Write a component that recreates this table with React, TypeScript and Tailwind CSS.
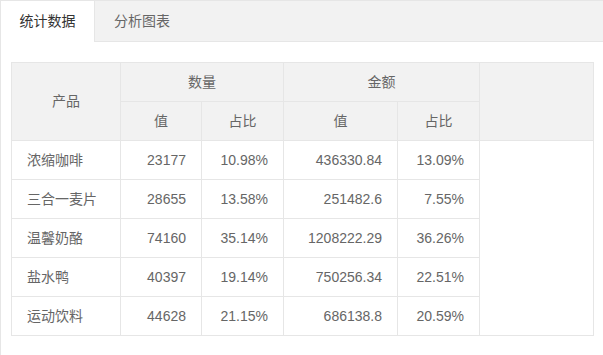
import React from "react";

const rows = [
  { name: "浓缩咖啡", qty: "23177", qtyPct: "10.98%", amt: "436330.84", amtPct: "13.09%" },
  { name: "三合一麦片", qty: "28655", qtyPct: "13.58%", amt: "251482.6", amtPct: "7.55%" },
  { name: "温馨奶酪", qty: "74160", qtyPct: "35.14%", amt: "1208222.29", amtPct: "36.26%" },
  { name: "盐水鸭", qty: "40397", qtyPct: "19.14%", amt: "750256.34", amtPct: "22.51%" },
  { name: "运动饮料", qty: "44628", qtyPct: "21.15%", amt: "686138.8", amtPct: "20.59%" },
];

const th = "border border-[#e6e6e6] h-[39px] p-0 text-center font-normal";
const td = "border border-[#e6e6e6] h-[39px] p-0 px-[15px]";

export default function App() {
  return (
    <div
      className="w-[603px] h-[355px] bg-white text-[14px] text-[#666] overflow-hidden"
      style={{ fontFamily: '"Liberation Sans", "Noto Sans CJK SC", sans-serif' }}
    >
      <div className="h-full border-l border-t border-[#e6e6e6] flex flex-col">
        {/* tab header */}
        <div className="flex h-[41px] bg-[#f2f2f2] border-b border-[#e6e6e6] shrink-0">
          <div className="w-[94px] h-[41px] bg-white text-[#333] border-r border-[#e6e6e6] flex items-center justify-center">
            统计数据
          </div>
          <div className="w-[94px] flex items-center justify-center">分析图表</div>
        </div>

        {/* tab content */}
        <div className="p-[10px] pt-[20px]">
          <table className="table-fixed border-collapse w-[582px]">
            <colgroup>
              <col className="w-[109px]" />
              <col className="w-[81px]" />
              <col className="w-[82px]" />
              <col className="w-[114px]" />
              <col className="w-[82px]" />
              <col className="w-[114px]" />
            </colgroup>
            <thead className="bg-[#f2f2f2]">
              <tr>
                <th rowSpan={2} className={th}>产品</th>
                <th colSpan={2} className={th}>数量</th>
                <th colSpan={2} className={th}>金额</th>
                <th rowSpan={2} className={th}></th>
              </tr>
              <tr>
                <th className={th}>值</th>
                <th className={th}>占比</th>
                <th className={th}>值</th>
                <th className={th}>占比</th>
              </tr>
            </thead>
            <tbody>
              {rows.map((r, i) => (
                <tr key={r.name}>
                  <td className={td}>{r.name}</td>
                  <td className={td + " text-right"}>{r.qty}</td>
                  <td className={td + " text-right"}>{r.qtyPct}</td>
                  <td className={td + " text-right"}>{r.amt}</td>
                  <td className={td + " text-right"}>{r.amtPct}</td>
                  {i === 0 && <td rowSpan={5} className="border border-[#e6e6e6] p-0"></td>}
                </tr>
              ))}
            </tbody>
          </table>
        </div>
      </div>
    </div>
  );
}
